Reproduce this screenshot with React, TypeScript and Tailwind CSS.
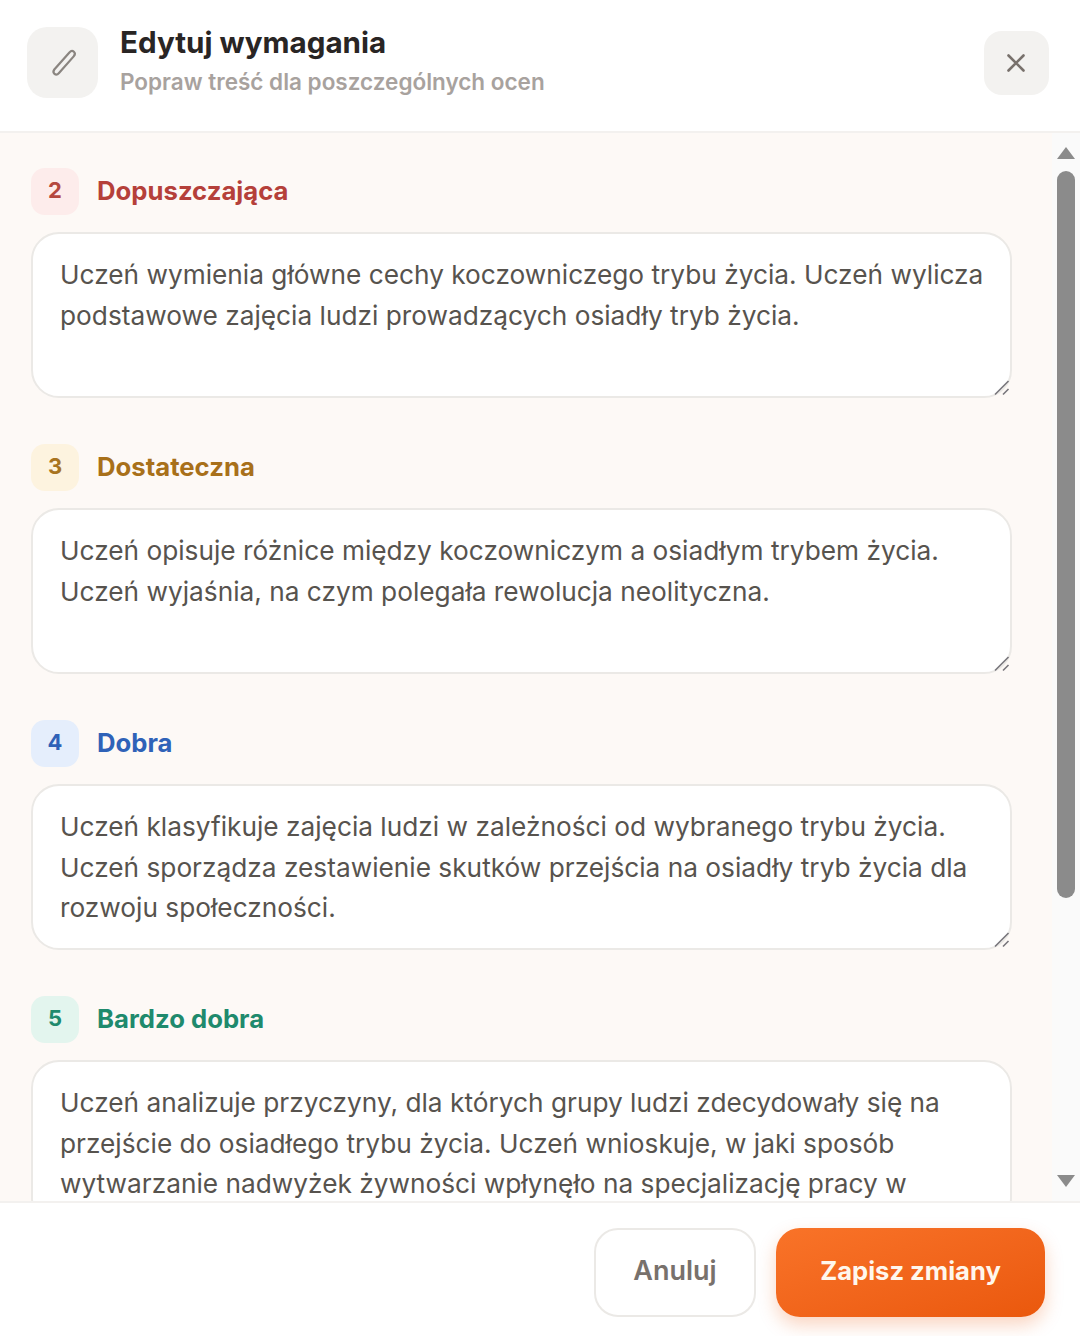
const sections = [
  {
    n: "2",
    title: "Dopuszczająca",
    badge: "bg-[#fdeceb] text-[#b5483f]",
    label: "text-[#b5403a]",
    text: "Uczeń wymienia główne cechy koczowniczego trybu życia. Uczeń wylicza podstawowe zajęcia ludzi prowadzących osiadły tryb życia.",
  },
  {
    n: "3",
    title: "Dostateczna",
    badge: "bg-[#fdf3df] text-[#a8741f]",
    label: "text-[#a8701a]",
    text: "Uczeń opisuje różnice między koczowniczym a osiadłym trybem życia. Uczeń wyjaśnia, na czym polegała rewolucja neolityczna.",
  },
  {
    n: "4",
    title: "Dobra",
    badge: "bg-[#e5eefc] text-[#2f62b8]",
    label: "text-[#2f62b8]",
    text: "Uczeń klasyfikuje zajęcia ludzi w zależności od wybranego trybu życia. Uczeń sporządza zestawienie skutków przejścia na osiadły tryb życia dla rozwoju społeczności.",
  },
  {
    n: "5",
    title: "Bardzo dobra",
    badge: "bg-[#e3f5ee] text-[#1f8a6d]",
    label: "text-[#1f8a6d]",
    text: "Uczeń analizuje przyczyny, dla których grupy ludzi zdecydowały się na przejście do osiadłego trybu życia. Uczeń wnioskuje, w jaki sposób wytwarzanie nadwyżek żywności wpłynęło na specjalizację pracy w społecznościach.",
  },
];

function Section({ s }: { s: (typeof sections)[number] }) {
  return (
    <section className="flex flex-col gap-[17px]">
      <div className="flex items-center gap-[18px]">
        <span
          className={`flex h-[47px] w-[48px] items-center justify-center rounded-[14px] pb-[4px] text-[22px] font-bold leading-none ${s.badge}`}
        >
          {s.n}
        </span>
        <h3 className={`pb-[2px] text-[25.7px] font-bold leading-none ${s.label}`}>{s.title}</h3>
      </div>
      <div className="relative h-[166px] w-[981px]">
        <textarea
          readOnly
          value={s.text}
          className="block h-full w-full resize-none overflow-hidden rounded-[28px] border-2 border-[#ebe9e6] bg-white py-[21px] pl-[27px] pr-[20px] text-[26.25px] leading-[40.5px] text-[#57534e] outline-none"
        />
        <svg
          className="absolute bottom-[2px] right-[2px]"
          width="16"
          height="16"
          viewBox="0 0 16 16"
          fill="none"
          stroke="#77757a"
          strokeWidth="1.6"
          aria-hidden="true"
        >
          <path d="M1 14.5 14.5 1" />
          <path d="M9 14.5 14.5 9" />
        </svg>
      </div>
    </section>
  );
}

export default function App() {
  return (
    <div className="flex h-[1336px] w-[1080px] flex-col overflow-hidden bg-white font-['Inter',sans-serif]">
      <header className="flex h-[133px] shrink-0 items-center border-b-2 border-[#f3f1ef] pb-[6px] pl-[27px] pr-[31px]">
        <div className="flex h-[71px] w-[71px] items-center justify-center rounded-[20px] bg-[#f3f2f0]">
          <svg
            width="30"
            height="30"
            viewBox="0 0 30 30"
            fill="none"
            stroke="#8a8580"
            strokeWidth="2.2"
            strokeLinejoin="round"
            aria-hidden="true"
          >
            <path d="M21.4 4.4c1.4-1.5 3.3-1.7 4.5-.6 1.3 1.2 1.1 3.1-.2 4.6L11 25c-1.3 1.5-3.2 2-4.5.9-1.3-1.1-1.2-3-.2-4.4Z" />
          </svg>
        </div>
        <div className="ml-[22px] flex flex-col pb-[4px]">
          <h2 className="text-[29.6px] font-bold leading-[34px] text-[#292524]">Edytuj wymagania</h2>
          <p className="mt-[8px] text-[22.5px] font-semibold leading-[30px] text-[#a8a29e]">
            Popraw treść dla poszczególnych ocen
          </p>
        </div>
        <button className="ml-auto flex h-[64px] w-[65px] items-center justify-center rounded-[18px] bg-[#f3f2f0] pr-[2px]">
          <svg
            width="22"
            height="22"
            viewBox="0 0 22 22"
            fill="none"
            stroke="#78716c"
            strokeWidth="2.6"
            strokeLinecap="round"
            aria-hidden="true"
          >
            <path d="M3.5 3.5 18.5 18.5M18.5 3.5 3.5 18.5" />
          </svg>
        </button>
      </header>

      <div className="flex min-h-0 flex-1">
        <main className="flex min-w-0 flex-1 flex-col gap-[46px] overflow-hidden bg-[#fdf9f6] pl-[31px] pt-[35px]">
          {sections.map((s) => (
            <Section key={s.n} s={s} />
          ))}
        </main>
        <div className="flex w-[28px] shrink-0 flex-col items-center bg-[#fafafa] pt-[13px]">
          <svg width="18" height="14" viewBox="0 0 18 14" fill="#8b8b8b" aria-hidden="true">
            <path d="M9 1 18 13H0Z" />
          </svg>
          <div className="mt-[11px] h-[727px] w-[18px] rounded-full bg-[#8b8b8b]" />
          <svg className="mt-auto mb-[13px]" width="18" height="14" viewBox="0 0 18 14" fill="#8b8b8b" aria-hidden="true">
            <path d="M9 13 18 1H0Z" />
          </svg>
        </div>
      </div>

      <footer className="flex h-[135px] shrink-0 items-start justify-end gap-[20px] border-t-2 border-[#f3f1ef] bg-white pr-[35px] pt-[25px]">
        <button className="flex h-[89px] w-[162px] items-center justify-center rounded-[24px] border-2 border-[#ebe9e6] bg-white pb-[3px] text-[27px] font-semibold text-[#78716c]">
          Anuluj
        </button>
        <button className="flex h-[89px] w-[269px] items-center justify-center rounded-[24px] bg-gradient-to-br from-[#f97328] to-[#ea580c] pb-[3px] text-[25.6px] font-bold text-[#fff7ed] shadow-[0_8px_18px_rgba(234,88,12,0.25)]">
          Zapisz zmiany
        </button>
      </footer>
    </div>
  );
}
